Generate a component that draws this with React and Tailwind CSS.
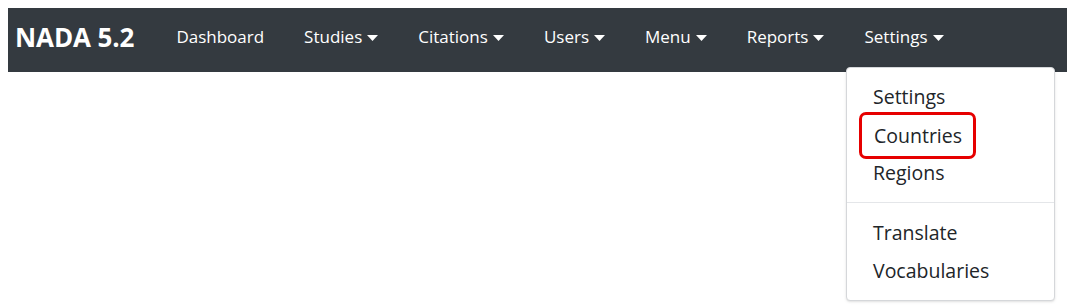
const items = ["Dashboard", "Studies", "Citations", "Users", "Menu", "Reports", "Settings"];
const withCaret = ["Studies", "Citations", "Users", "Menu", "Reports", "Settings"];

const Caret = () => (
  <svg width="11" height="6" viewBox="0 0 11 6" className="ml-[5px] mt-[1px]">
    <path d="M0 0 L11 0 L5.5 6 Z" fill="#ffffff" />
  </svg>
);

export default function App() {
  return (
    <div className="relative w-[1075px] h-[308px] bg-white p-2" style={{ fontFamily: '"Open Sans", "Noto Sans", sans-serif' }}>
      <nav className="flex items-center h-16 bg-[#343a40] pl-[7px] pb-[6px]">
        <span className="text-white font-bold text-[26px] mr-[22px] tracking-[-0.1px]">NADA 5.2</span>
        {items.map((it) => (
          <span key={it} className="flex items-center px-5 text-white text-[17px]">
            {it}
            {withCaret.includes(it) && <Caret />}
          </span>
        ))}
      </nav>

      <div className="absolute left-[846px] top-[67px] w-[209px] h-[234px] bg-white border border-[#d5d7da] rounded-[4px] shadow-sm pt-[10px] text-[#212529] text-[19.5px]">
        <div className="px-[26px] h-[38px] flex items-center">Settings</div>
        <div className="px-[26px] h-[38px] flex items-center">
          <span className="-ml-[14px] pl-[12px] pr-[11px] py-[8px] border-[3px] border-[#e60000] rounded-[7px] leading-[25px]">Countries</span>
        </div>
        <div className="px-[26px] h-[38px] flex items-center">Regions</div>
        <div className="mt-[10px] mb-[11px] border-t border-[#e4e6e9]" />
        <div className="px-[26px] h-[38px] flex items-center">Translate</div>
        <div className="px-[26px] h-[38px] flex items-center">Vocabularies</div>
      </div>
    </div>
  );
}
